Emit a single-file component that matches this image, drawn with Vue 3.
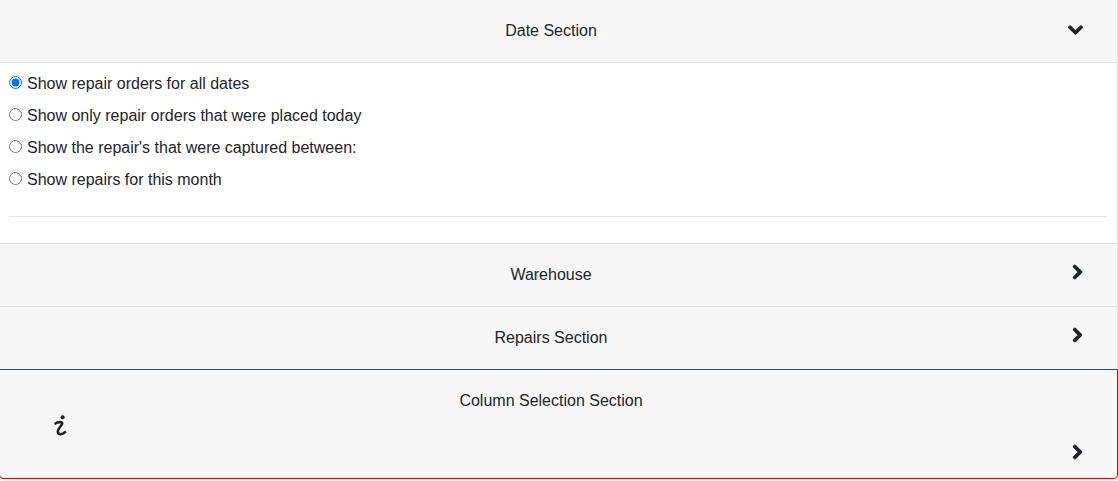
<script setup>
const dateOptions = [
  { id: 'all', label: 'Show repair orders for all dates' },
  { id: 'today', label: 'Show only repair orders that were placed today' },
  { id: 'between', label: "Show the repair's that were captured between:" },
  { id: 'month', label: 'Show repairs for this month' },
]

const chevronRight = 'M285.476 272.971L91.132 467.314c-9.373 9.373-24.569 9.373-33.941 0l-22.667-22.667c-9.357-9.357-9.375-24.522-.04-33.901L188.505 256 34.484 101.255c-9.335-9.379-9.317-24.544.04-33.901l22.667-22.667c9.373-9.373 24.569-9.373 33.941 0L285.475 239.03c9.373 9.372 9.373 24.568.001 33.941z'
const chevronDown = 'M207.029 381.476L12.686 187.132c-9.373-9.373-9.373-24.569 0-33.941l22.667-22.667c9.357-9.357 24.522-9.375 33.901-.04L224 284.505l154.745-154.021c9.379-9.335 24.544-9.317 33.901.04l22.667 22.667c9.373 9.373 9.373 24.569 0 33.941L240.971 381.476c-9.373 9.372-24.569 9.372-33.942 0z'
</script>

<template>
  <div class="accordion">
    <section class="panel">
      <header class="panel-head">
        <span class="panel-title">Date Section</span>
        <svg class="chev chev-down" viewBox="0 0 448 512"><path :d="chevronDown" /></svg>
      </header>
      <div class="panel-body">
        <label v-for="opt in dateOptions" :key="opt.id" class="radio-row">
          <input type="radio" name="dateRange" :value="opt.id" :checked="opt.id === 'all'" />
          <span>{{ opt.label }}</span>
        </label>
        <hr class="divider" />
      </div>
    </section>

    <section class="panel">
      <header class="panel-head">
        <span class="panel-title">Warehouse</span>
        <svg class="chev" viewBox="0 0 320 512"><path :d="chevronRight" /></svg>
      </header>
    </section>

    <section class="panel">
      <header class="panel-head">
        <span class="panel-title">Repairs Section</span>
        <svg class="chev" viewBox="0 0 320 512"><path :d="chevronRight" /></svg>
      </header>
    </section>

    <section class="panel panel-required">
      <span class="panel-title">Column Selection Section</span>
      <svg class="info" viewBox="0 0 14 24" fill="none">
        <circle cx="8.6" cy="3.2" r="2" fill="#212529" />
        <path d="M1.5 9.5C3.5 8 8.5 7.4 8.2 9.6 7.9 11.6 3.6 14.6 3.8 17.6 4 20.8 8 21.2 11 18.2" stroke="#212529" stroke-width="2.6" stroke-linecap="round" />
      </svg>
      <svg class="chev" viewBox="0 0 320 512"><path :d="chevronRight" /></svg>
    </section>
  </div>
</template>

<style scoped>
.accordion {
  width: 1119px;
  margin-left: -1px;
  font-family: "Liberation Sans", Arial, sans-serif;
  font-size: 16px;
  color: #212529;
}

.panel {
  border-right: 1px solid #dfdfdf;
  border-left: 1px solid #dfdfdf;
  border-bottom: 1px solid #dfdfdf;
}

.panel-head {
  display: grid;
  grid-template-columns: 1058px 34px 10px 1fr;
  align-items: center;
  height: 62px;
  background: #f7f7f7;
}

.panel-title {
  grid-column: 1 / 4;
  grid-row: 1;
  text-align: center;
}

.chev {
  grid-column: 2;
  grid-row: 1;
  justify-self: center;
  width: 11px;
  height: 16px;
  margin: -7px 0 0 4px;
  overflow: visible;
  fill: #212529;
  stroke: #212529;
  stroke-width: 40;
  stroke-linejoin: round;
}

.chev-down {
  width: 15px;
  height: 16px;
  margin: -2px 0 0;
}

.panel-body {
  padding: 5px 10px 0 9px;
  height: 175px;
  border-top: 1px solid #dfdfdf;
  background: #fff;
}

.radio-row {
  display: flex;
  align-items: center;
  height: 32px;
  gap: 5px;
}

.radio-row input {
  flex: none;
  width: 13px;
  height: 13px;
  margin: -3px 0 0;
}

.divider {
  margin: 20px 0 0;
  border: 0;
  border-top: 1px solid #e5e5e5;
}

.panel-required {
  display: grid;
  grid-template-columns: 54px 14px 990px 34px 10px 1fr;
  grid-template-rows: 20px 21px 30px 23px 1fr;
  height: 108px;
  margin-top: -1px;
  margin-bottom: 2px;
  border: 1px solid #e00000;
  border-radius: 0 0 4px 4px;
  background: #f7f7f7;
}

.panel-required .panel-title {
  grid-column: 1 / 6;
  grid-row: 2;
  align-self: end;
  line-height: 20px;
}

.info {
  grid-column: 2;
  grid-row: 3;
  align-self: center;
  width: 14px;
  height: 24px;
}

.panel-required .chev {
  grid-column: 4;
  grid-row: 4;
  align-self: center;
  margin-top: -1px;
}
</style>
